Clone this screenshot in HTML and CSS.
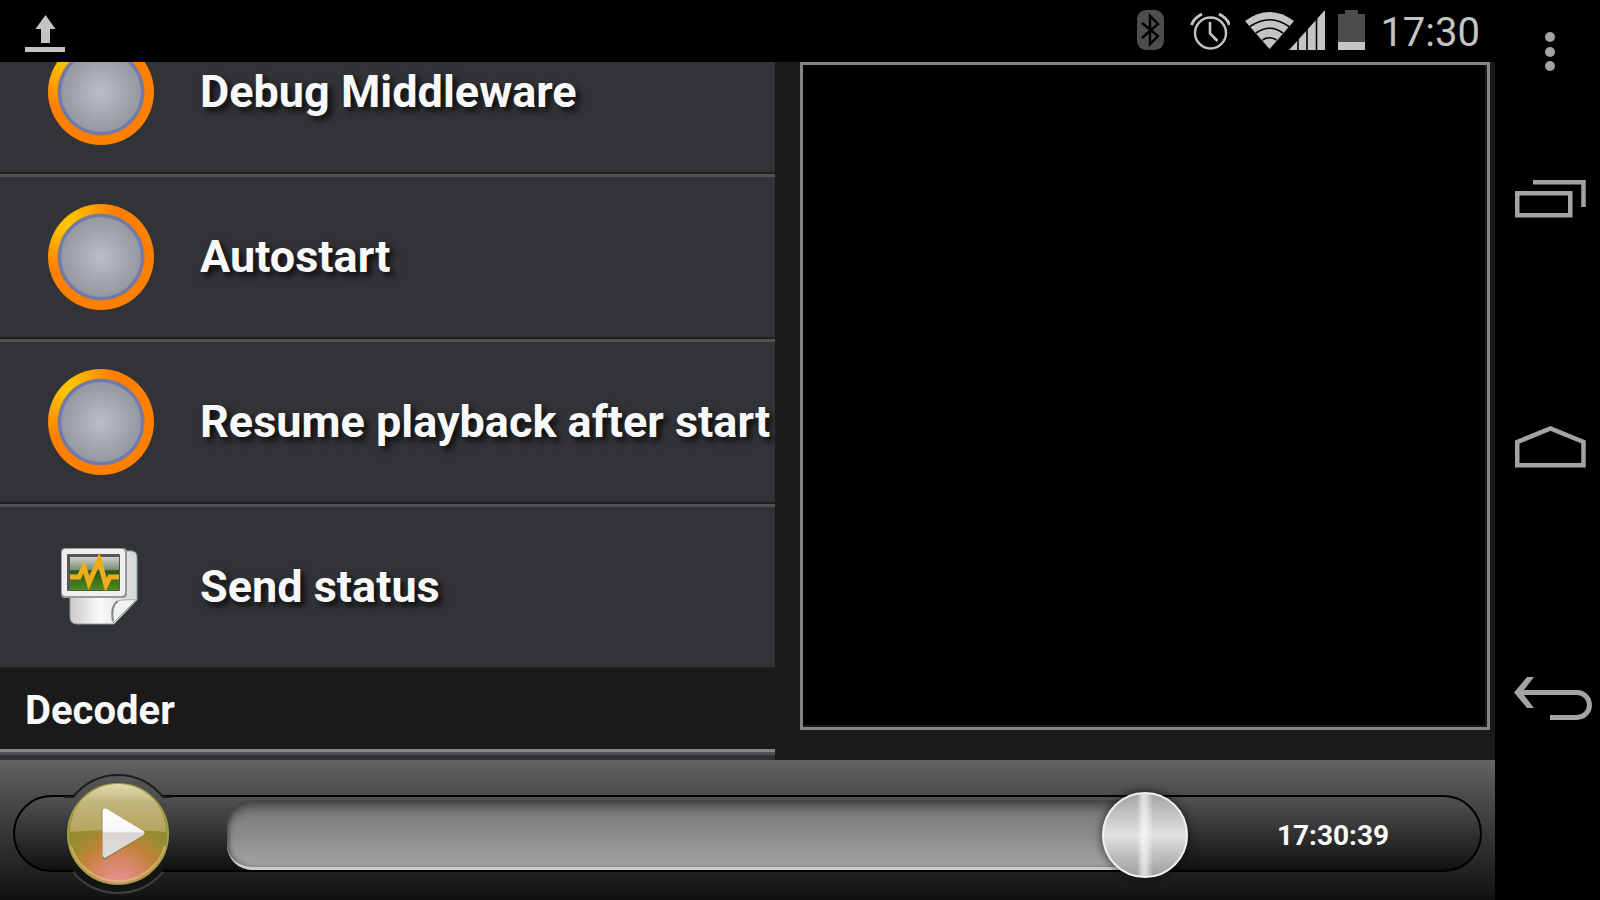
FILE: index.html
```html
<!DOCTYPE html>
<html lang="en">
<head>
    <meta charset="UTF-8">
    <meta name="viewport" content="width=device-width, initial-scale=1.0">
    <title>Settings</title>
    <link rel="stylesheet" href="styles.css">
</head>
<body>
    <div class="app">
        <header class="status-bar">
            <svg class="upload" width="40" height="42" viewBox="0 0 40 42" fill="#c4c4c4">
                <path d="M20.500 5L30.500 19H25V33H16V19H10.500Z"/>
                <rect x="0" y="37" width="40" height="5"/>
            </svg>
            <svg class="bluetooth" width="27" height="42" viewBox="0 0 27 42">
                <rect width="27" height="40" rx="9" fill="#4d4d4d"/>
                <path d="M5 13L21 26L13 34V6L21 14L5 28" fill="none" stroke="#000" stroke-width="2.400"/>
            </svg>
            <svg class="alarm" width="40" height="42" viewBox="0 0 40 42" fill="none" stroke="#c4c4c4">
                <circle cx="20.500" cy="23" r="15.500" stroke-width="2.400"/>
                <path d="M20 12V23.500L27.500 31" stroke-width="2.600"/>
                <path d="M1.500 15Q4 8 12 4M39.500 15Q37 8 29 4" stroke-width="3"/>
            </svg>
            <svg class="signal" width="80" height="42" viewBox="0 0 80 42">
                <path d="M0 11Q24.500 -7 49 11L24.500 39Z" fill="#c4c4c4"/>
                <path d="M5 16.500Q24.500 3 44 16.500M11 23Q24.500 13.500 38 23M17.500 30Q24.500 25.500 31.500 30" fill="none" stroke="#000" stroke-width="1.600"/>
                <path d="M44 40L80 0V40Z" fill="#c4c4c4"/>
                <path d="M53 20V41M62 10V41M71.500 0V41" stroke="#000" stroke-width="1.600"/>
            </svg>
            <svg class="battery" width="27" height="42" viewBox="0 0 27 42">
                <path d="M0 4H7V0H20V4H27V32H0Z" fill="#4d4d4d"/>
                <rect y="32" width="27" height="8" fill="#c4c4c4"/>
            </svg>
            <span class="clock">17:30</span>
        </header>

        <main class="content">
            <div class="list-wrap">
                <div class="list">
                    <label class="row"><input type="checkbox"><span>Debug Middleware</span></label>
                    <label class="row"><input type="checkbox"><span>Autostart</span></label>
                    <label class="row"><input type="checkbox"><span>Resume playback after start</span></label>
                    <button class="row" type="button">
                        <svg width="106" height="106" viewBox="0 0 106 106">
                            <defs>
                                <linearGradient id="paper" x1="0" x2="1"><stop offset="0" stop-color="#c9c9c9"/><stop offset=".45" stop-color="#fafafa"/><stop offset="1" stop-color="#d4d4d4"/></linearGradient>
                                <linearGradient id="screen" x1="0" x2="0" y1="0" y2="1"><stop offset="0" stop-color="#d0d0d0"/><stop offset=".38" stop-color="#7b9070"/><stop offset=".42" stop-color="#28541b"/><stop offset="1" stop-color="#4d8c1d"/></linearGradient>
                            </defs>
                            <path d="M27 17H83Q89 17 89 23V66L66 90H29Q22 90 22 83V22Z" fill="url(#paper)" stroke="#8ca39d"/>
                            <path d="M65 89Q63 72 70 67Q76 65 88 66Z" fill="#f2f2f2" stroke="#aaa"/>
                            <path d="M65 87Q62 72 70 67" fill="none" stroke="#8a8a8a" stroke-width="2"/>
                            <rect x="13" y="14" width="66" height="50" rx="4" fill="#999"/>
                            <rect x="14" y="15" width="63" height="47" rx="4" fill="#efefef"/>
                            <rect x="19" y="20" width="53" height="37" rx="1" fill="#555"/>
                            <rect x="22" y="23" width="49" height="33" fill="url(#screen)"/>
                            <path d="M22 43H31L36 33L41 49L51 26L58 51L62 43H71" fill="none" stroke="#efac1b" stroke-width="5"/>
                        </svg>
                        <span>Send status</span>
                    </button>
                    <h2 class="section">Decoder</h2>
                    <div class="row"></div>
                </div>
            </div>
            <div class="video-pane">
                <div class="video"></div>
            </div>
        </main>

        <footer class="player">
            <div class="pill">
                <button class="play" type="button" aria-label="Play">
                    <svg width="110" height="124" viewBox="0 0 110 124">
                        <defs>
                            <linearGradient id="bump" x1="0" x2="0" y1="0" y2="1"><stop offset="0" stop-color="#565656"/><stop offset=".2" stop-color="#4e4e4e"/><stop offset=".8" stop-color="#121212"/><stop offset="1" stop-color="#161616"/></linearGradient>
                            <radialGradient id="ball" cx=".5" cy="1" r=".75"><stop offset="0" stop-color="#e79494"/><stop offset=".3" stop-color="#d7866a"/><stop offset=".55" stop-color="#c08238"/><stop offset=".8" stop-color="#968c30"/><stop offset="1" stop-color="#8c8c2c"/></radialGradient>
                            <linearGradient id="gloss" x1="0" x2="0" y1="0" y2="1"><stop offset="0" stop-color="#e2d9b0"/><stop offset=".4" stop-color="#c0b57c"/><stop offset="1" stop-color="#b7a45e"/></linearGradient>
                            <linearGradient id="arrow" x1="0" x2="0" y1="0" y2="1"><stop offset="0" stop-color="#fff"/><stop offset=".47" stop-color="#f6f6f6"/><stop offset=".5" stop-color="#d9d6d2"/><stop offset="1" stop-color="#dedbd8"/></linearGradient>
                        </defs>
                        <path d="M10 24Q28 2 55 2T100 24V100Q82 122 55 122T10 100Z" fill="url(#bump)"/>
                        <path d="M1 24H10Q28 2 55 2T100 24H109" fill="none" stroke="#1c1c1c" stroke-width="2"/>
                        <path d="M10 99Q28 120 55 120T100 99" fill="none" stroke="#3e3e3e" stroke-width="2"/>
                        <circle cx="55" cy="61" r="50" fill="url(#ball)" stroke="#a5a045" stroke-width="2"/>
                        <path d="M7 59A48 48 0 0 1 103 59Q80 57 55 57T7 59Z" fill="url(#gloss)"/>
                        <path d="M8 73A49 49 0 0 0 102 73" fill="none" stroke="#dfc77c" stroke-width="2" opacity=".6"/>
                        <path d="M41 38L80 60L42 84Z" fill="#6d6340" stroke="#6d6340" stroke-width="5" stroke-linejoin="round" opacity=".5"/>
                        <path d="M42 38L79 60L42 82Z" fill="url(#arrow)" stroke="url(#arrow)" stroke-width="5" stroke-linejoin="round"/>
                    </svg>
                </button>
                <input class="seek" type="range" min="0" max="100" value="100" aria-label="Position">
                <span class="time">17:30:39</span>
            </div>
        </footer>
    </div>

    <nav class="nav-bar">
        <button type="button" aria-label="Menu">
            <svg width="105" height="60" viewBox="0 0 105 60" fill="#a3a3a3">
                <circle cx="55" cy="22" r="5"/>
                <circle cx="55" cy="37" r="5"/>
                <circle cx="55" cy="51" r="5"/>
            </svg>
        </button>
        <button type="button" aria-label="Recent apps">
            <svg width="105" height="60" viewBox="0 0 105 60" fill="none" stroke="#a3a3a3" stroke-width="4.500">
                <path d="M22.250 24.250H75.250V46.250H22.250ZM38 13.250H88.500V38"/>
            </svg>
        </button>
        <button type="button" aria-label="Home">
            <svg width="105" height="60" viewBox="0 0 105 60" fill="none" stroke="#a3a3a3" stroke-width="4.500">
                <path d="M22.250 48.250V25L55.500 11.500L88.500 25V48.250Z"/>
            </svg>
        </button>
        <button type="button" aria-label="Back">
            <svg width="105" height="60" viewBox="0 0 105 60">
                <path d="M25 27.500H82A12.500 12.500 0 0 1 82 52.500H55" fill="none" stroke="#a3a3a3" stroke-width="5"/>
                <path d="M32 12H39L27 27.500L39 43H32L19 27.500Z" fill="#a3a3a3"/>
            </svg>
        </button>
    </nav>
</body>
</html>
```

FILE: styles.css
```css
* {
    box-sizing: border-box;
}

body {
    margin: 0;
    height: 100vh;
    display: flex;
    background: #000;
    color: #f8f8f8;
    font-family: Roboto, sans-serif;
    overflow: hidden;
}

button {
    margin: 0;
    padding: 0;
    border: 0;
    background: none;
    color: inherit;
    font: inherit;
    cursor: pointer;
}

svg {
    display: block;
    flex: none;
}

.app {
    flex: 1;
    min-width: 0;
    display: flex;
    flex-direction: column;
    background: #1a1a1a;
}

/* status bar */
.status-bar {
    display: flex;
    align-items: center;
    height: 62px;
    padding: 0 15px 0 25px;
    background: #000;
}

.upload {
    margin-right: auto;
}

.alarm {
    margin: 0 15px 0 26px;
}

.battery {
    margin: 0 15px 0 13px;
}

.clock {
    padding-top: 4px;
    font-size: 40px;
    line-height: 48px;
    color: #c4c4c4;
}

/* content */
.content {
    flex: 1;
    min-height: 0;
    display: grid;
    grid-template-columns: minmax(0, 775fr) minmax(0, 720fr);
}

.list-wrap {
    min-height: 0;
    overflow: hidden;
}

/* list is scrolled down a little */
.list {
    margin-top: -53px;
}

.row {
    display: flex;
    align-items: center;
    gap: 46px;
    width: 100%;
    height: 165px;
    padding-left: 48px;
    border-top: 3px solid #525252;
    border-bottom: 2px solid #1f1f1f;
    background: #323337;
    font-size: 45px;
    font-weight: bold;
    line-height: 54px;
    white-space: nowrap;
    text-shadow: 4px 4px 6px rgba(0, 0, 0, 0.8);
}

.row input {
    appearance: none;
    flex: none;
    width: 106px;
    height: 106px;
    margin: 0;
    border-radius: 50%;
    background:
        radial-gradient(circle, #bbbdc8 0, #9799a1 39px, #6675b6 41px, #8c7b88 43px, transparent 44px),
        radial-gradient(circle at 20% 20%, #ffc800 0, #ffbe00 10px, #ff7f00 48px);
}

.section {
    margin: 0;
    height: 83px;
    padding: 18px 25px 14px;
    border-bottom: 3px solid #858585;
    font-size: 40px;
    line-height: 48px;
}

.video-pane {
    display: flex;
    padding: 0 5px 30px 25px;
}

.video {
    flex: 1;
    border: 3px solid #858585;
    background: #000;
    box-shadow: inset -2px -2px 0 #1a1a1a;
}

/* player */
.player {
    height: 140px;
    padding: 35px 13px 0;
    background: linear-gradient(#636363, #4c4c4c 35px, #111);
}

.pill {
    display: flex;
    align-items: center;
    height: 77px;
    padding: 2px 0 0 48px;
    border: 2px solid #000;
    border-radius: 39px;
    background: linear-gradient(#525252, #101010);
}

.play {
    flex: none;
}

.seek {
    appearance: none;
    flex: 1;
    min-width: 0;
    height: 86px;
    margin: 0 0 0 54px;
    background: none;
}

.seek::-webkit-slider-runnable-track {
    height: 70px;
    border-bottom: 3px solid #ccc;
    border-radius: 25px 35px 35px 25px;
    background: linear-gradient(#747474, #a2a2a2);
    box-shadow: inset 0 8px 8px rgba(0, 0, 0, 0.35), inset 2px 0 4px rgba(0, 0, 0, 0.3);
}

.seek::-webkit-slider-thumb {
    appearance: none;
    width: 86px;
    height: 86px;
    margin-top: -8px;
    border: 2px solid #f0f0f0;
    border-radius: 50%;
    background:
        linear-gradient(90deg, transparent 40%, rgba(255, 255, 255, 0.6) 47%, rgba(255, 255, 255, 0.6) 51%, transparent 60%),
        linear-gradient(#a4a4a4, #e2e2e2 50%, #9c9c9c);
    box-shadow: 0 0 10px rgba(0, 0, 0, 0.7);
}

.time {
    flex: none;
    width: 292px;
    padding: 2px 2px 0 0;
    text-align: center;
    font-size: 28px;
    font-weight: bold;
    line-height: 34px;
}

/* system buttons */
.nav-bar {
    flex: none;
    width: 105px;
    display: grid;
    grid-template-rows: 75px 1fr 1fr 1fr;
    padding-bottom: 81px;
}

.nav-bar button {
    display: flex;
    align-items: center;
}

.nav-bar button:first-child {
    align-items: flex-end;
}
```
